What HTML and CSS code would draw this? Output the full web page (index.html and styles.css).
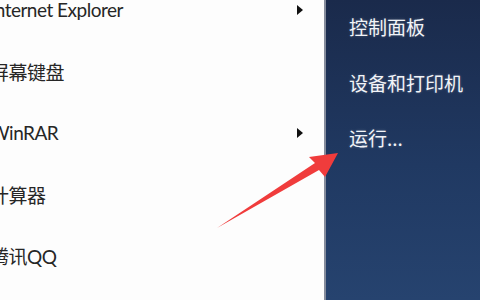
FILE: index.html
```html
<!DOCTYPE html>
<html lang="zh-CN">
<head>
    <meta charset="UTF-8">
    <title>开始菜单</title>
    <link rel="stylesheet" href="styles.css">
</head>
<body>
    <div class="menu">
        <ul class="programs">
            <li class="item"><span>Internet Explorer</span><i class="sub"></i></li>
            <li class="item"><span>屏幕键盘</span></li>
            <li class="item"><span>WinRAR</span><i class="sub"></i></li>
            <li class="item"><span>计算器</span></li>
            <li class="item"><span>腾讯QQ</span></li>
        </ul>
        <div class="divider"></div>
        <ul class="links">
            <li>控制面板</li>
            <li>设备和打印机</li>
            <li>运行...</li>
        </ul>

        <!-- 红色箭头标注 -->
        <svg class="pointer" width="480" height="300" viewBox="0 0 480 300">
            <polygon points="217,228 315,163 309,157 338,153 325,177 319,170" fill="#f03c3c"/>
        </svg>
    </div>
</body>
</html>
```

FILE: styles.css
```css
html, body {
    margin: 0;
    padding: 0;
}
body {
    width: 480px;
    height: 300px;
    overflow: hidden;
    background: #fff;
}
.menu {
    position: relative;
    display: flex;
    height: 300px;
}
.programs {
    list-style: none;
    margin: 0;
    padding: 0;
    width: 324px;
    background: #fdfdfd;
}
.programs .item {
    display: flex;
    align-items: center;
    justify-content: space-between;
    height: 61.5px;
    margin-top: -20px;
    margin-bottom: 20px;
    padding: 0 21px 0 0;
    margin-left: -10px;
    font-family: "Lato", "Noto Sans CJK SC", sans-serif;
    font-size: 19px;
    letter-spacing: -0.5px;
    color: #262626;
}
.programs .item:first-child {
    margin-top: -21px;
}
.sub {
    width: 0;
    height: 0;
    border-top: 5px solid transparent;
    border-bottom: 5px solid transparent;
    border-left: 6px solid #111;
}
.divider {
    width: 2px;
    background: #858c9c;
}
.links {
    list-style: none;
    margin: 0;
    padding: 13px 0 0 23px;
    flex: 1;
    background: linear-gradient(to bottom, #1a2a4b 0%, #203962 55%, #26436f 100%);
}
.links li {
    height: 55.5px;
    line-height: 28px;
    font-family: "Noto Sans CJK SC", sans-serif;
    font-size: 19px;
    color: #f2f4f8;
    text-shadow: 0 0 3px rgba(255,255,255,0.25);
}
.pointer {
    position: absolute;
    left: 0;
    top: 0;
    pointer-events: none;
}
```
